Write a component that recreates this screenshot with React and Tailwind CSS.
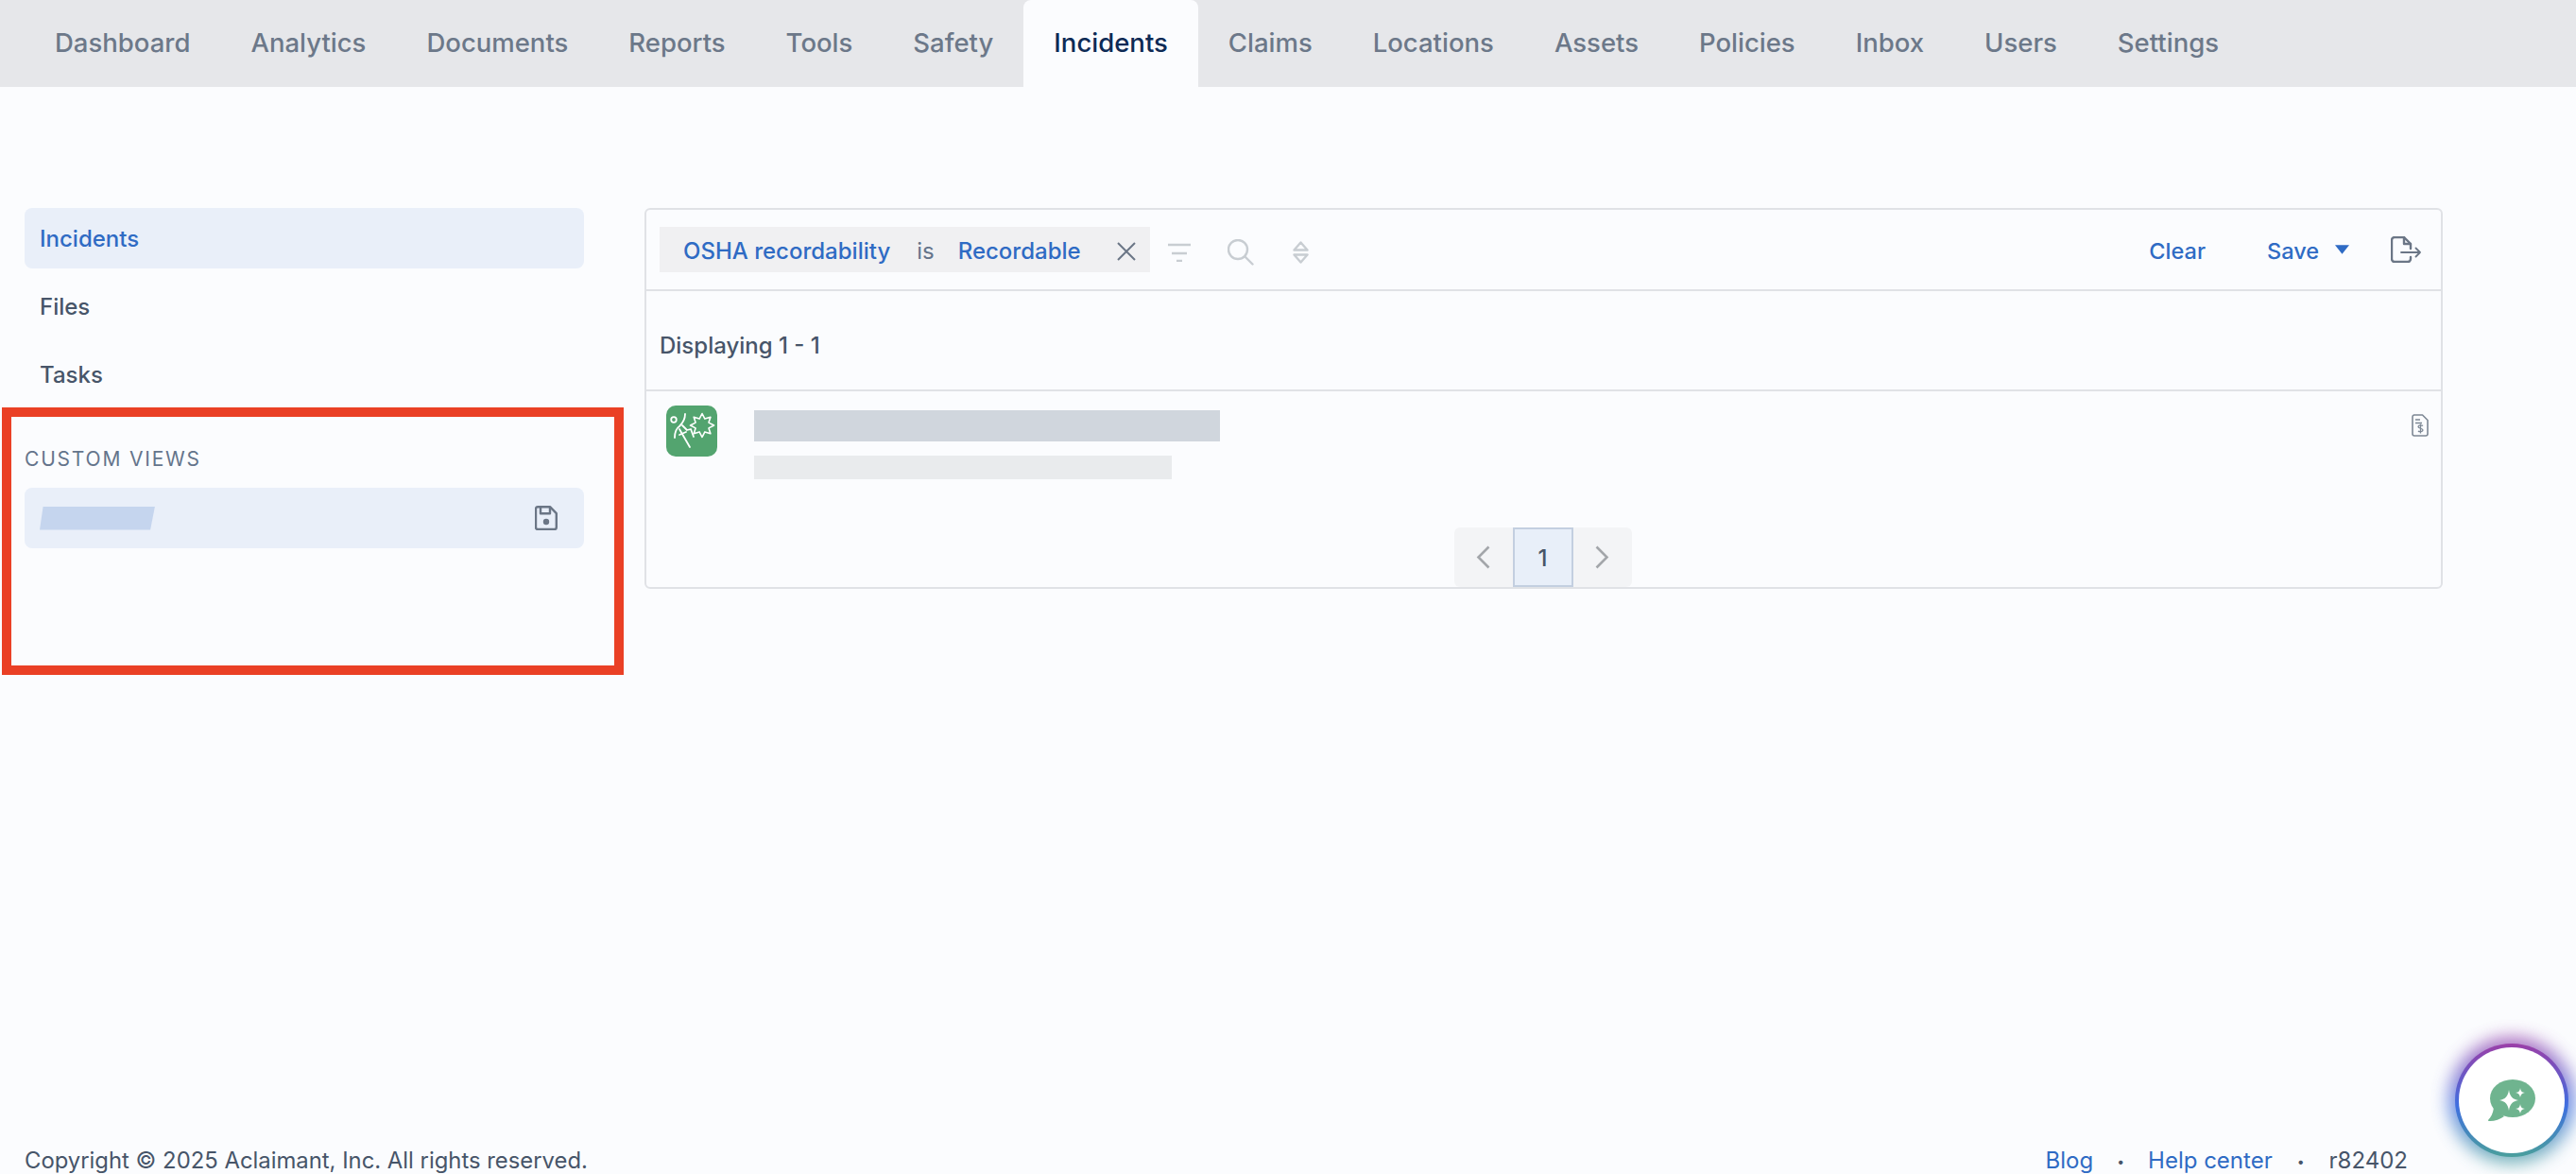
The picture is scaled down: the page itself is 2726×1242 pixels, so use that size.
import React from "react";

const tabs = [
  "Dashboard",
  "Analytics",
  "Documents",
  "Reports",
  "Tools",
  "Safety",
  "Incidents",
  "Claims",
  "Locations",
  "Assets",
  "Policies",
  "Inbox",
  "Users",
  "Settings",
];

const FallIcon = () => (
  <svg viewBox="0 0 54 54" className="w-[54px] h-[54px]" fill="none" stroke="#fff" strokeWidth="1.8" strokeLinecap="round" strokeLinejoin="round">
    <circle cx="8" cy="15" r="2.8" />
    <path d="M20 9c0 6-3 10-6 13-3 2-5 6-5 12" />
    <path d="M14 25l11 19" />
    <path d="M17 21l5 5 4-1 3 8" />
    <path d="M14 31l7-3" />
    <path d="M38 8.500l2.900 5.600 6-1.900-1.900 5.900 5.600 2.900-5.600 2.900 1.900 5.900-6-1.900-2.900 5.600-2.900-5.600-5.900 1.900 1.900-5.900-5.600-2.900 5.600-2.900-1.900-5.900 5.900 1.900z" strokeWidth="1.6" />
  </svg>
);

const SaveIcon = () => (
  <svg viewBox="0 0 24 26" className="w-6 h-[26px]" fill="none" stroke="#6b7686" strokeWidth="2.4" strokeLinejoin="round">
    <path d="M3 1.200h13l6.800 7V23a2 2 0 0 1-2 2H3a2 2 0 0 1-2-2V3a2 2 0 0 1 2-1.800z" />
    <path d="M6 1.200v7h10v-7" />
    <circle cx="12" cy="17" r="3.200" fill="#6b7686" stroke="none" />
  </svg>
);

const FilterIcon = () => (
  <svg viewBox="0 0 24 20" className="w-6 h-5" fill="none" stroke="#c8cdd2" strokeWidth="2.4">
    <path d="M0 2h24M4 11h16M9 19h6" />
  </svg>
);

const SearchIcon = () => (
  <svg viewBox="0 0 28 28" className="w-7 h-7" fill="none" stroke="#c8cdd2" strokeWidth="2.4" strokeLinecap="round">
    <circle cx="11" cy="11" r="10" />
    <path d="M18.500 18.500l8 8" />
  </svg>
);

const SortIcon = () => (
  <svg viewBox="0 0 17 24" className="w-[17px] h-6" fill="none" stroke="#c8cdd2" strokeWidth="2.4" strokeLinejoin="round">
    <path d="M8.500 1.500l7 8h-14z" />
    <path d="M8.500 22.500l7-8h-14z" />
  </svg>
);

const ExportIcon = () => (
  <svg viewBox="0 0 32 28" className="w-8 h-7" fill="none" stroke="#6b7686" strokeWidth="2.4" strokeLinecap="round" strokeLinejoin="round">
    <path d="M21 13V8l-7-7H4a3 3 0 0 0-3 3v20a3 3 0 0 0 3 3h14a3 3 0 0 0 3-3v-2" />
    <path d="M14 1v7h7" />
    <path d="M11 17h20M26.500 12.500L31 17l-4.500 4.500" strokeWidth="1.800" />
  </svg>
);

const BillIcon = () => (
  <svg viewBox="0 0 18 24" className="w-[18px] h-6" fill="none" stroke="#7d8794" strokeWidth="1.6" strokeLinejoin="round">
    <path d="M2.500 1h9L17 6.500V21a2 2 0 0 1-2 2H3a2 2 0 0 1-2-2V3a2 2 0 0 1 1.500-2z" />
    <path d="M4 6h5M4 9.500h7" />
    <path d="M12 12.500c-1-1-5-1-5 1s5 1.500 5 3.500-4 2-5 1M9.500 10.500v10" strokeWidth="1.300" />
  </svg>
);

const ChatIcon = () => (
  <svg viewBox="0 0 50 44" className="w-[50px] h-11">
    <ellipse cx="26" cy="20" rx="24" ry="20" fill="#6fb48f" />
    <path d="M6 30C5 36 3 40 0 43c-.4 1 1 1 2 1 5 0 11-2 15-5z" fill="#6fb48f" />
    <path d="M22 11c1 7 4 10 10 11-6 1-9 4-10 11-1-7-4-10-10-11 6-1 9-4 10-11z" fill="#fff" />
    <path d="M34 9c.6 3.500 1.800 4.600 5 5-3.200.6-4.400 1.800-5 5-.6-3.200-1.800-4.400-5-5 3.200-.4 4.400-1.500 5-5z" fill="#fff" />
    <path d="M34 26c.6 3.500 1.800 4.600 5 5-3.200.6-4.400 1.800-5 5-.6-3.200-1.800-4.400-5-5 3.200-.4 4.400-1.500 5-5z" fill="#fff" />
  </svg>
);

export default function App() {
  return (
    <div className="relative h-[1242px] flex flex-col overflow-hidden bg-[#fbfcfe] text-[#475569] text-[24px] font-['Inter',sans-serif]">
      <nav className="flex h-[92px] shrink-0 pl-[26px] bg-[#e6e7ea] text-[27.5px] font-medium text-[#6c7889]">
        {tabs.map((tab) =>
          tab === "Incidents" ? (
            <div key={tab} className="flex items-center px-8 rounded-t-lg bg-[#fbfcfe] text-[#0d2a55]">
              {tab}
            </div>
          ) : (
            <div key={tab} className="flex items-center px-8">
              {tab}
            </div>
          )
        )}
      </nav>

      <main className="flex items-start gap-16 pl-[26px] pr-[141px] pt-[128px]">
        <aside className="w-[592px] shrink-0">
          <div className="flex items-center h-16 px-4 pt-[2px] rounded-lg bg-[#e9eff9] text-[#2f6bc4] font-medium">
            Incidents
          </div>
          <div className="flex items-center h-16 px-4 pt-[2px] mt-2 font-medium text-[#475569]">Files</div>
          <div className="flex items-center h-16 px-4 pt-[2px] mt-2 font-medium text-[#475569]">Tasks</div>
          <div className="mt-[43px] text-[21px] leading-[30px] tracking-[1.8px] text-[#64748b]">CUSTOM VIEWS</div>
          <div className="flex items-center justify-between h-16 mt-[15px] pl-4 pr-[28px] rounded-lg bg-[#e9eff9]">
            <div className="w-[122px] h-[25px] bg-[#c5d5ee] [clip-path:polygon(3%_0,100%_0,96%_100%,0_100%)]" />
            <SaveIcon />
          </div>
        </aside>

        <section className="flex-1 h-[403px] flex flex-col rounded-md border-2 border-[#e0e2e6]">
          <div className="flex items-center h-[86px] shrink-0 pl-[14px] pr-[21px] border-b-2 border-[#e0e2e6]">
            <div className="flex items-center w-[519px] h-12 pl-[25px] pt-[3px] bg-[#f0f0f2] font-medium text-[#2f6bc4]">
              <span>OSHA recordability</span>
              <span className="ml-[28px] font-normal text-[#64748b]">is</span>
              <span className="ml-[25px]">Recordable</span>
              <svg viewBox="0 0 20 20" className="ml-[38px] w-5 h-5" fill="none" stroke="#6b7686" strokeWidth="2">
                <path d="M1 1l18 18M19 1L1 19" />
              </svg>
            </div>
            <div className="ml-[19px] pt-[6px]">
              <FilterIcon />
            </div>
            <div className="ml-[39px] pt-[6px]">
              <SearchIcon />
            </div>
            <div className="ml-[41px] pt-[6px]">
              <SortIcon />
            </div>
            <span className="ml-auto pt-[3px] text-[23.5px] font-medium text-[#2f6bc4]">Clear</span>
            <span className="ml-[65px] pt-[3px] text-[23.5px] font-medium text-[#2f6bc4]">Save</span>
            <svg viewBox="0 0 16 10" className="ml-[17px] w-[15px] h-[10px]">
              <path d="M0 0h16L8 10z" fill="#2f6bc4" />
            </svg>
            <div className="ml-[44px]">
              <ExportIcon />
            </div>
          </div>

          <div className="flex items-center h-[106px] shrink-0 pl-[14px] pt-[11px] border-b-2 border-[#e0e2e6] font-medium">
            Displaying 1 - 1
          </div>

          <div className="flex-1 flex flex-col">
            <div className="flex items-start pt-[15px] pl-[21px] pr-[13px]">
              <div className="w-[54px] h-[54px] rounded-[10px] bg-[#53a46f]">
                <FallIcon />
              </div>
              <div className="ml-[39px] pt-[5px]">
                <div className="w-[493px] h-[33px] bg-[#d0d6dd]" />
                <div className="w-[442px] h-[25px] mt-[15px] bg-[#e9ebed]" />
              </div>
              <div className="ml-auto pt-[9px]">
                <BillIcon />
              </div>
            </div>
            <div className="mt-auto flex justify-center pr-[2px]">
              <div className="flex h-[63px] items-center rounded-md overflow-hidden bg-[#f3f4f6]">
                <div className="flex items-center justify-center w-[62px] h-full">
                  <svg viewBox="0 0 15 25" className="w-[15px] h-[25px]" fill="none" stroke="#a3a6aa" strokeWidth="2.6">
                    <path d="M13.500 1.500l-11 11 11 11" />
                  </svg>
                </div>
                <div className="flex items-center justify-center w-[64px] h-full pt-[2px] border-2 border-[#c3cfe0] bg-[#e8eff9] font-medium text-[#475569]">
                  1
                </div>
                <div className="flex items-center justify-center w-[62px] h-full">
                  <svg viewBox="0 0 15 25" className="w-[15px] h-[25px]" fill="none" stroke="#a3a6aa" strokeWidth="2.6">
                    <path d="M1.500 1.500l11 11-11 11" />
                  </svg>
                </div>
              </div>
            </div>
          </div>
        </section>
      </main>

      <footer className="mt-auto flex items-center justify-between h-[32px] pl-[26px] pr-[178px] mb-[-2px]">
        <span className="text-[23.85px]">Copyright © 2025 Aclaimant, Inc. All rights reserved.</span>
        <div className="flex items-center">
          <span className="text-[#2f6bc4]">Blog</span>
          <span className="mx-[25px] text-[14px]">•</span>
          <span className="text-[#2f6bc4]">Help center</span>
          <span className="mx-[26px] text-[14px]">•</span>
          <span>r82402</span>
        </div>
      </footer>

      {/* red annotation */}
      <div className="absolute left-[2px] top-[431px] w-[658px] h-[283px] border-[10px] border-[#ea4025]" />

      {/* chat button */}
      <div className="absolute left-[2598px] top-[1104px] w-[120px] h-[120px]">
        <div className="absolute -inset-[7px] rounded-full bg-[linear-gradient(180deg,#9b3fa8_0%,#3f6fe0_55%,#4a9f9c_100%)] blur-[9px] opacity-75" />
        <div className="relative w-full h-full rounded-full p-1 bg-[linear-gradient(180deg,#9b3fa8_0%,#3f6fe0_55%,#4a9f9c_100%)]">
          <div className="flex items-center justify-center w-full h-full rounded-full bg-white">
            <ChatIcon />
          </div>
        </div>
      </div>
    </div>
  );
}
